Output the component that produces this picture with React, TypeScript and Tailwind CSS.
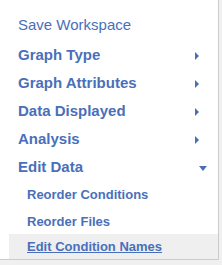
import React from "react";

const RightArrow = () => (
  <span className="block w-0 h-0 border-y-[4px] border-y-transparent border-l-[4px] border-l-[#4a6fba]" />
);
const DownArrow = () => (
  <span className="block w-0 h-0 border-x-[4.5px] border-x-transparent border-t-[5px] border-t-[#4a6fba]" />
);

const mainItems = ["Graph Type", "Graph Attributes", "Data Displayed", "Analysis"];

export default function App() {
  return (
    <div className="w-[222px] h-[265px] bg-[#f0f0f0] overflow-hidden" style={{ fontFamily: '"Liberation Sans", Arial, sans-serif' }}>
      <div className="w-[219px] h-[260px] bg-white border-r border-b border-[#cccccc] pt-[11px] text-[#4a6fba]">
        <div className="h-[28px] leading-[28px] pl-[18px] text-[15px] mb-[2px]">Save Workspace</div>
        {mainItems.map((t) => (
          <div key={t} className="h-[28px] flex items-center justify-between pl-[18px] pr-[19px]">
            <span className="text-[15px] font-bold leading-[28px]">{t}</span>
            <span className="mt-[2px]"><RightArrow /></span>
          </div>
        ))}
        <div className="h-[28px] flex items-center justify-between pl-[18px] pr-[11px]">
          <span className="text-[15px] font-bold leading-[28px]">Edit Data</span>
          <span className="mt-[2px]"><DownArrow /></span>
        </div>
        <div className="ml-[9px] text-[13px] font-bold">
          <div className="h-[28px] leading-[28px] pl-[18px]">Reorder Conditions</div>
          <div className="h-[25px] leading-[25px] pl-[18px]">Reorder Files</div>
          <div className="h-[25px] leading-[25px] pl-[18px] bg-[#efefef]">
            <span className="underline">Edit Condition Names</span>
          </div>
        </div>
      </div>
    </div>
  );
}
